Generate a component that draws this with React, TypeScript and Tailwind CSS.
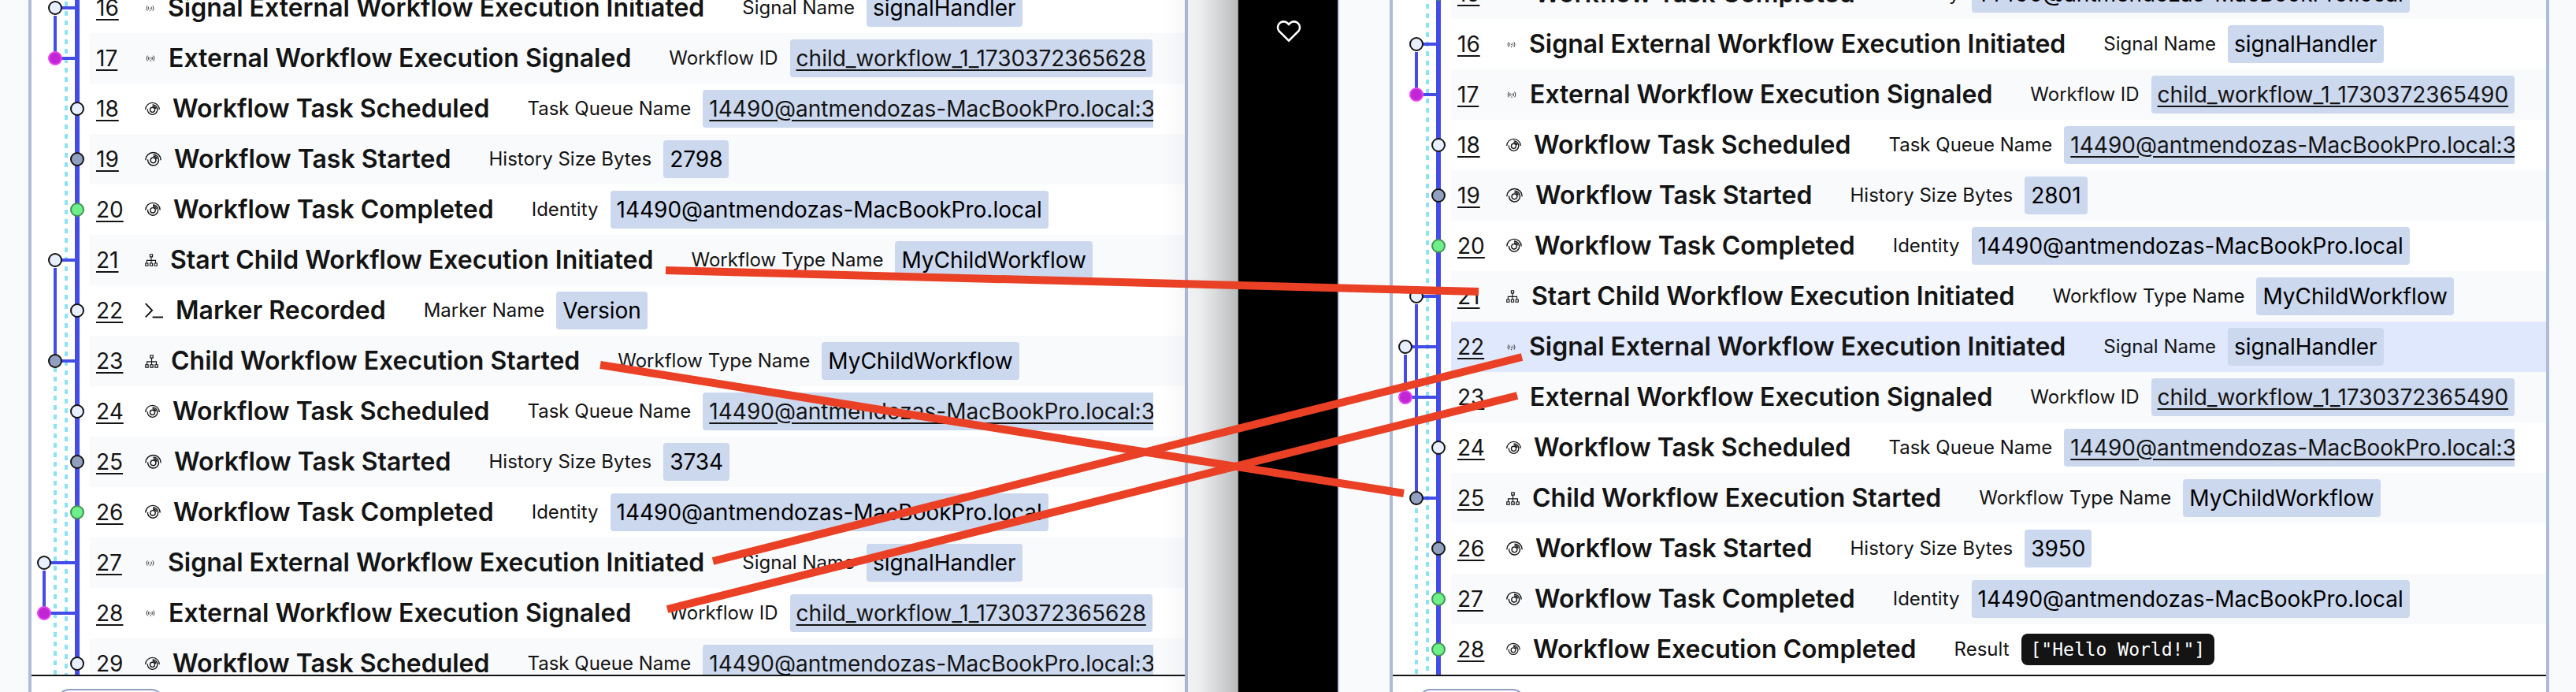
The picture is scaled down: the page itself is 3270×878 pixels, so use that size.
import React from "react";

type IconKind = "signal" | "workflow" | "child" | "marker";
type Dot = "open" | "gray" | "green" | "pink";

type EventRow = {
  id: number;
  icon: IconKind;
  iconClass: string;
  name: string;
  label: string;
  value: string;
  kind: "text" | "link" | "code";
  lane: number;
  dot: Dot;
  active?: boolean;
};

const HOST = "14490@antmendozas-MacBookPro.local";

type Base = Omit<EventRow, "id" | "lane" | "value" | "dot">;
const scheduled: Base = { icon: "workflow", iconClass: "size-[19px]", name: "Workflow Task Scheduled", label: "Task Queue Name", kind: "link" };
const started: Base = { icon: "workflow", iconClass: "size-[21px]", name: "Workflow Task Started", label: "History Size Bytes", kind: "text" };
const completed: Base = { icon: "workflow", iconClass: "size-5", name: "Workflow Task Completed", label: "Identity", kind: "text" };
const signalInitiated: Base = { icon: "signal", iconClass: "size-[13px]", name: "Signal External Workflow Execution Initiated", label: "Signal Name", kind: "text" };
const signaled: Base = { icon: "signal", iconClass: "size-3.5", name: "External Workflow Execution Signaled", label: "Workflow ID", kind: "link" };
const childInitiated: Base = { icon: "child", iconClass: "size-4", name: "Start Child Workflow Execution Initiated", label: "Workflow Type Name", kind: "text" };
const childStarted: Base = { icon: "child", iconClass: "size-[17px]", name: "Child Workflow Execution Started", label: "Workflow Type Name", kind: "text" };
const marker: Base = { icon: "marker", iconClass: "size-[23px]", name: "Marker Recorded", label: "Marker Name", kind: "text" };
const workflowCompleted: Base = { icon: "workflow", iconClass: "size-[18px]", name: "Workflow Execution Completed", label: "Result", kind: "code" };

const leftRows: EventRow[] = [
  { ...signalInitiated, id: 16, value: "signalHandler", lane: 2, dot: "open" },
  { ...signaled, id: 17, value: "child_workflow_1_1730372365628", lane: 2, dot: "pink" },
  { ...scheduled, id: 18, value: `${HOST}:3`, lane: 0, dot: "open" },
  { ...started, id: 19, value: "2798", lane: 0, dot: "gray" },
  { ...completed, id: 20, value: HOST, lane: 0, dot: "green" },
  { ...childInitiated, id: 21, value: "MyChildWorkflow", lane: 2, dot: "open" },
  { ...marker, id: 22, value: "Version", lane: 0, dot: "open" },
  { ...childStarted, id: 23, value: "MyChildWorkflow", lane: 2, dot: "gray" },
  { ...scheduled, id: 24, value: `${HOST}:3`, lane: 0, dot: "open" },
  { ...started, id: 25, value: "3734", lane: 0, dot: "gray" },
  { ...completed, id: 26, value: HOST, lane: 0, dot: "green" },
  { ...signalInitiated, id: 27, value: "signalHandler", lane: 3, dot: "open" },
  { ...signaled, id: 28, value: "child_workflow_1_1730372365628", lane: 3, dot: "pink" },
  { ...scheduled, id: 29, value: `${HOST}:3`, lane: 0, dot: "open" },
];

const rightRows: EventRow[] = [
  { ...completed, id: 15, value: HOST, lane: 0, dot: "green" },
  { ...signalInitiated, id: 16, value: "signalHandler", lane: 2, dot: "open" },
  { ...signaled, id: 17, value: "child_workflow_1_1730372365490", lane: 2, dot: "pink" },
  { ...scheduled, id: 18, value: `${HOST}:3`, lane: 0, dot: "open" },
  { ...started, id: 19, value: "2801", lane: 0, dot: "gray" },
  { ...completed, id: 20, value: HOST, lane: 0, dot: "green" },
  { ...childInitiated, id: 21, value: "MyChildWorkflow", lane: 2, dot: "open" },
  { ...signalInitiated, id: 22, value: "signalHandler", lane: 3, dot: "open", active: true },
  { ...signaled, id: 23, value: "child_workflow_1_1730372365490", lane: 3, dot: "pink" },
  { ...scheduled, id: 24, value: `${HOST}:3`, lane: 0, dot: "open" },
  { ...childStarted, id: 25, value: "MyChildWorkflow", lane: 2, dot: "gray" },
  { ...started, id: 26, value: "3950", lane: 0, dot: "gray" },
  { ...completed, id: 27, value: HOST, lane: 0, dot: "green" },
  { ...workflowCompleted, id: 28, value: '["Hello World!"]', lane: 0, dot: "green" },
];

type Links = { solid: [number, number, number][]; dashed: { lane: number; from: number }[] };

const leftLinks: Links = {
  solid: [[2, 0, 1], [2, 5, 7], [3, 11, 12]],
  dashed: [{ lane: 1, from: 0 }, { lane: 2, from: 488 }],
};
const rightLinks: Links = {
  solid: [[2, 1, 2], [2, 6, 10], [3, 7, 8]],
  dashed: [{ lane: 1, from: 9 }, { lane: 2, from: 685 }],
};

const ROW = 64;
const laneX = (lane: number) => 58 - lane * 14;
const rowY = (i: number) => i * ROW + ROW / 2;

const dotColors: Record<Dot, { fill: string; stroke: string }> = {
  open: { fill: "#e8efff", stroke: "#141414" },
  gray: { fill: "#92a0c0", stroke: "#141414" },
  green: { fill: "#6df08a", stroke: "#439055" },
  pink: { fill: "#c026d3", stroke: "#e845f4" },
};

function Timeline({ rows, links }: { rows: EventRow[]; links: Links }) {
  const height = rows.length * ROW;
  return (
    <svg width="74" height={height} className="shrink-0" aria-hidden="true">
      {links.dashed.map((d) => (
        <line key={d.lane} x1={laneX(d.lane)} x2={laneX(d.lane)} y1={d.from} y2={height} stroke="#8be3f5" strokeWidth="4" strokeDasharray="6 6" />
      ))}
      <line x1={laneX(0)} x2={laneX(0)} y1="0" y2={height} stroke="#444ce7" strokeWidth="6" />
      {links.solid.map(([lane, a, b]) => (
        <line key={`${lane}-${a}`} x1={laneX(lane)} x2={laneX(lane)} y1={rowY(a) + 10} y2={rowY(b)} stroke="#444ce7" strokeWidth="4" />
      ))}
      {rows.map((r, i) => (
        <g key={r.id}>
          {r.lane > 0 && <line x1={laneX(r.lane)} x2={laneX(0)} y1={rowY(i)} y2={rowY(i)} stroke="#444ce7" strokeWidth="4" />}
          <circle cx={laneX(r.lane)} cy={rowY(i)} r="8" fill={dotColors[r.dot].fill} stroke={dotColors[r.dot].stroke} strokeWidth="2" />
        </g>
      ))}
    </svg>
  );
}

function EventIcon({ kind, className }: { kind: IconKind; className: string }) {
  const cls = `shrink-0 ${className}`;
  if (kind === "workflow") {
    return (
      <svg viewBox="0 0 20 20" className={cls} fill="none" stroke="#141414" strokeWidth="1.4" aria-hidden="true">
        <path d="M0.8 10.6 A9.2 9.2 0 0 1 19.2 10.6" />
        <path d="M3.5 9.8 A6.6 6.6 0 1 0 10 4" />
        <path d="M10 6 A5 5 0 0 1 14.6 9.4" />
        <circle cx="10" cy="10.8" r="3.2" />
      </svg>
    );
  }
  if (kind === "child") {
    return (
      <svg viewBox="0 0 20 20" className={cls} fill="none" stroke="#141414" strokeWidth="1.4" aria-hidden="true">
        <path d="M8 0.9h4v4h-4zM0.9 15h4v4h-4zM8 15h4v4h-4zM15.1 15h4v4h-4zM10 5v10M3 15v-4.6h14V15" />
      </svg>
    );
  }
  if (kind === "marker") {
    return (
      <svg viewBox="0 0 24 24" className={cls} fill="none" stroke="#141414" strokeWidth="2" aria-hidden="true">
        <path d="M0.8 2.2 L9.5 11.2 L0.8 20.2 M10 20.4H24" />
      </svg>
    );
  }
  return (
    <svg viewBox="0 0 14 14" className={cls} fill="none" stroke="#141414" strokeWidth="0.9" aria-hidden="true">
      <path d="M3.4 3.6C1.9 5.6 1.9 8.4 3.4 10.4M5.2 5C4.5 6.2 4.5 7.8 5.2 9M10.6 3.6C12.1 5.6 12.1 8.4 10.6 10.4M8.8 5C9.5 6.2 9.5 7.8 8.8 9M7 6.2v1.4M7 9.4v1.6" />
    </svg>
  );
}

function Value({ row }: { row: EventRow }) {
  if (row.kind === "code") {
    return (
      <code className="rounded-lg bg-[#141414] px-3 font-['DejaVu_Sans_Mono',monospace] text-[23px] leading-10 whitespace-pre text-white">
        {row.value}
      </code>
    );
  }
  return (
    <span className="shrink-0 rounded-sm bg-[#ccd8ee] px-2 text-[28px] leading-[48px] whitespace-nowrap text-black">
      {row.kind === "link" ? (
        <a href="#" className="text-[#141414] underline decoration-2 underline-offset-4">{row.value}</a>
      ) : (
        row.value
      )}
    </span>
  );
}

function Row({ row, striped }: { row: EventRow; striped: boolean }) {
  const bg = row.active ? "bg-[#e0e8fd]" : striped ? "bg-[#f8fafc]" : "bg-white";
  return (
    <li className={`flex h-16 shrink-0 items-center pr-10 pl-2 ${bg}`}>
      <div className="w-[62px] shrink-0">
        <a href="#" className="text-[28px] leading-10 underline decoration-2 underline-offset-4">{row.id}</a>
      </div>
      <div className="flex min-w-0 flex-1 items-center overflow-hidden">
        <EventIcon kind={row.icon} className={row.iconClass} />
        <h3 className="ml-4 shrink-0 text-[32px] leading-10 font-semibold whitespace-nowrap">{row.name}</h3>
        <span className="mr-[15px] ml-12 shrink-0 text-2xl whitespace-nowrap">{row.label}</span>
        <Value row={row} />
      </div>
    </li>
  );
}

function Panel({ rows, links, stripe, offset }: { rows: EventRow[]; links: Links; stripe: number; offset: string }) {
  return (
    <section className="flex min-w-0 flex-1 flex-col border-x-4 border-[#aebbd9] bg-white">
      <div className="min-h-0 flex-1 overflow-hidden">
        <div className={`flex ${offset}`}>
          <Timeline rows={rows} links={links} />
          <ul className="flex min-w-0 flex-1 flex-col">
            {rows.map((r, i) => (
              <Row key={r.id} row={r} striped={i % 2 === stripe} />
            ))}
          </ul>
        </div>
      </div>
      <footer className="h-[22px] shrink-0 overflow-hidden border-t-2 border-[#141414] px-8 pt-4">
        <select aria-label="Rows per page" className="h-12 w-[136px] appearance-none rounded-2xl border-2 border-[#92a0c0] bg-white" />
      </footer>
    </section>
  );
}

const arrows = [
  [845, 343, 1877, 370],
  [762, 463, 1782, 626],
  [905, 712, 1932, 453],
  [847, 773, 1926, 502],
];

export default function App() {
  return (
    <main className="relative flex h-screen overflow-hidden bg-black font-[Inter,sans-serif] text-[#141414]">
      <div className="relative flex min-w-0 flex-1 bg-[#f8fafc] pr-16 pl-9">
        <Panel rows={leftRows} links={leftLinks} stripe={1} offset="-mt-[22px]" />
        <div className="pointer-events-none absolute inset-y-0 right-0 w-24 border-r border-black/40 bg-linear-to-r from-black/0 via-black/5 to-black/25" />
      </div>
      <div className="flex w-[126px] shrink-0 items-start justify-center pt-6">
        <button type="button" aria-label="Favorite">
          <svg width="34" height="32" viewBox="-1 0 34 32" fill="none" stroke="#fff" strokeWidth="2.6" aria-hidden="true">
            <path d="M17 27.6 L4.6 15.4 A7.4 7.4 0 0 1 15 5 L17 7 L19 5 A7.4 7.4 0 0 1 29.4 15.4 Z" />
          </svg>
        </button>
      </div>
      <div className="flex min-w-0 flex-1 border-l-2 border-[#b4c0db] bg-[#f8fafc] pr-[34px] pl-16">
        <Panel rows={rightRows} links={rightLinks} stripe={0} offset="-mt-10" />
      </div>
      <svg className="pointer-events-none absolute inset-0 size-full" stroke="#ea4025" strokeWidth="10" aria-hidden="true">
        {arrows.map(([x1, y1, x2, y2]) => (
          <line key={y1} x1={x1} y1={y1} x2={x2} y2={y2} />
        ))}
      </svg>
    </main>
  );
}
